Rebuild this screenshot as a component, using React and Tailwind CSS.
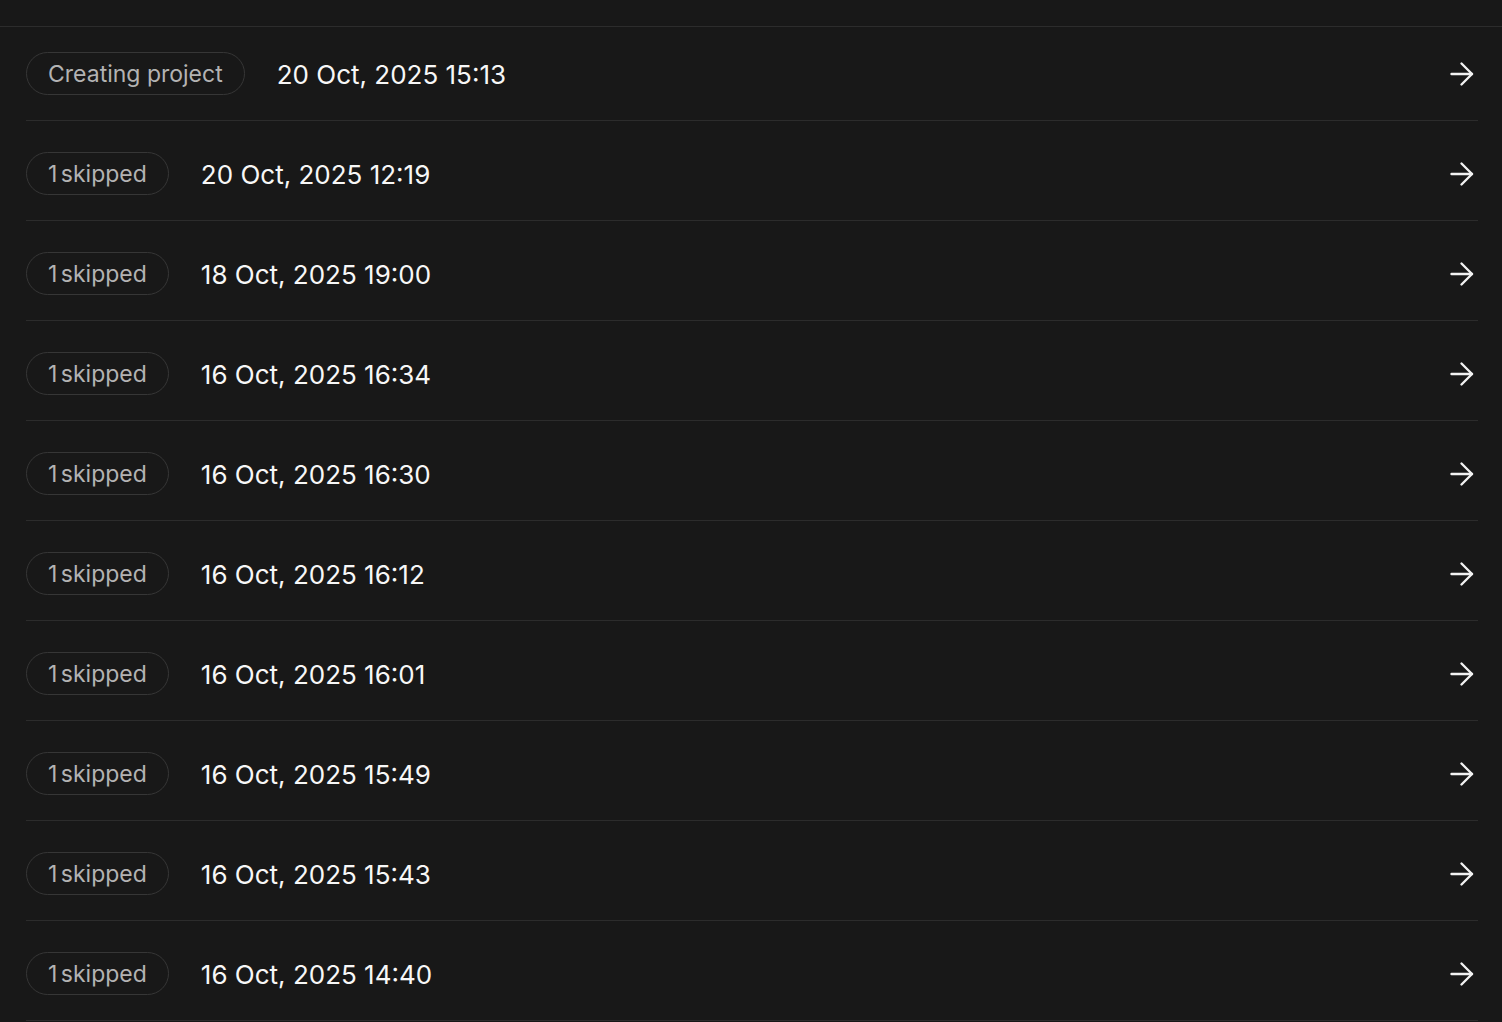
import React from "react";

const rows = [
  { badge: "Creating project", date: "20 Oct, 2025 15:13" },
  { badge: "1 skipped", date: "20 Oct, 2025 12:19" },
  { badge: "1 skipped", date: "18 Oct, 2025 19:00" },
  { badge: "1 skipped", date: "16 Oct, 2025 16:34" },
  { badge: "1 skipped", date: "16 Oct, 2025 16:30" },
  { badge: "1 skipped", date: "16 Oct, 2025 16:12" },
  { badge: "1 skipped", date: "16 Oct, 2025 16:01" },
  { badge: "1 skipped", date: "16 Oct, 2025 15:49" },
  { badge: "1 skipped", date: "16 Oct, 2025 15:43" },
  { badge: "1 skipped", date: "16 Oct, 2025 14:40" },
];

function Arrow() {
  return (
    <svg width="26" height="26" viewBox="0 0 26 26" fill="none" stroke="#f2f2f2" strokeWidth="2.4" strokeLinecap="round" strokeLinejoin="round">
      <path d="M3.5 13h20.5" />
      <path d="M13.5 2.5 24 13 13.5 23.5" />
    </svg>
  );
}

export default function App() {
  return (
    <div className="min-h-[1022px] w-full bg-[#181818] font-['Inter',sans-serif] overflow-hidden">
      <div className="h-[27px] border-b border-[#2c2c2c]" />
      <div className="flex flex-col gap-[6px] pl-[26px] pr-[24px]">
        {rows.map((r, i) => (
          <div key={i} className="flex items-center gap-[32px] py-[25px] border-b border-[#2c2c2c]">
            <span
              className={
                i === 0
                  ? "flex h-[43px] items-center rounded-full border border-[#363636] px-[21px] pt-[1px] text-[23px] text-[#b3b3b3]"
                  : "flex h-[43px] items-center rounded-full border border-[#363636] px-[21px] pt-[1px] text-[23px] text-[#b3b3b3] [word-spacing:-3px]"
              }
            >
              {r.badge}
            </span>
            <span className="pt-[1px] text-[26px] text-[#f7f7f7]">{r.date}</span>
            <span className="ml-auto mr-[4px] flex">
              <Arrow />
            </span>
          </div>
        ))}
      </div>
    </div>
  );
}
